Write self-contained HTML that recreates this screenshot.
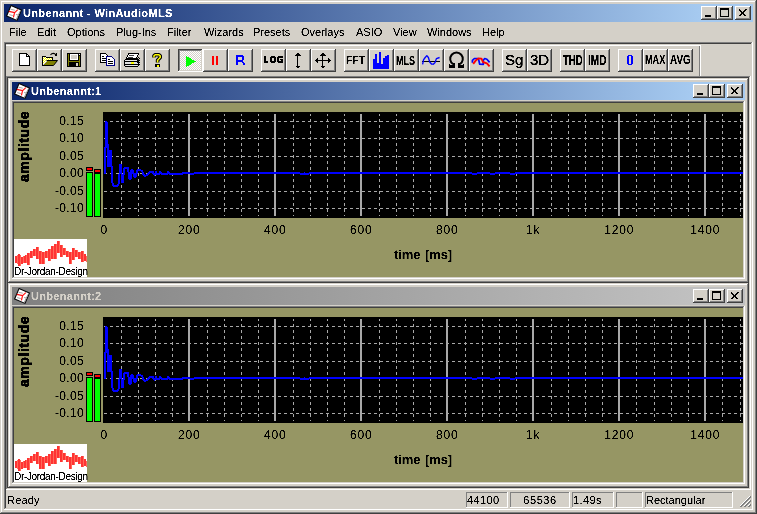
<!DOCTYPE html><html><head><meta charset="utf-8"><style>
html,body{margin:0;padding:0;}
body{width:757px;height:514px;overflow:hidden;position:relative;background:#d4d0c8;font-family:"Liberation Sans",sans-serif;font-size:11px;line-height:12px;color:#000;}
div{box-sizing:border-box;}
svg{position:absolute;overflow:visible;}
.t{filter:url(#crisp);}
</style></head><body><svg width="0" height="0" style="position:absolute"><filter id="crisp" x="-10%" y="-10%" width="120%" height="120%"><feComponentTransfer><feFuncA type="linear" slope="3" intercept="-0.8"/></feComponentTransfer></filter></svg>
<div style="position:absolute;left:0px;top:0px;width:757px;height:514px;background:#404040"></div>
<div style="position:absolute;left:0px;top:0px;width:756px;height:513px;background:#d4d0c8"></div>
<div style="position:absolute;left:1px;top:1px;width:755px;height:512px;background:#808080"></div>
<div style="position:absolute;left:1px;top:1px;width:754px;height:511px;background:#ffffff"></div>
<div style="position:absolute;left:2px;top:2px;width:753px;height:510px;background:#d4d0c8"></div>
<div style="position:absolute;left:4px;top:4px;width:749px;height:18px;background:linear-gradient(to right,#0a246a 0px,#a6caf0 697px)"></div>
<svg style="left:6px;top:5px" width="16" height="16" viewBox="0 0 16 16">
<polygon points="5,0.6 15.4,5 11,15.4 0.6,11" fill="#fff" stroke="#000" stroke-width="1.1"/>
<path d="M14.2 6.2 L10.4 14.2" stroke="#909090" stroke-width="1" fill="none"/>
<path d="M4.5 4.2 L8.8 5.2 M3.2 9.6 L6.8 10.6 M10 9.5 L12.5 10" stroke="#a0a0a0" stroke-width="0.9" fill="none"/>
<path d="M2.8 6.3 L8.6 7.6 L11.8 4.6 M8.6 7.6 L7.4 12.3" stroke="#ff1010" stroke-width="1.2" fill="none"/>
</svg>
<div class="t" style="position:absolute;left:23px;top:7px;white-space:pre;color:#fff;font-weight:bold;letter-spacing:0.35px">Unbenannt - WinAudioMLS</div>
<div style="position:absolute;left:701px;top:6px;width:16px;height:14px;background:#404040"></div>
<div style="position:absolute;left:701px;top:6px;width:15px;height:13px;background:#ffffff"></div>
<div style="position:absolute;left:702px;top:7px;width:14px;height:12px;background:#808080"></div>
<div style="position:absolute;left:702px;top:7px;width:13px;height:11px;background:#d4d0c8"></div>
<div style="position:absolute;left:703px;top:8px;width:12px;height:10px;background:#d4d0c8"></div>
<div style="position:absolute;left:705px;top:15px;width:6px;height:2px;background:#000"></div>
<div style="position:absolute;left:717px;top:6px;width:16px;height:14px;background:#404040"></div>
<div style="position:absolute;left:717px;top:6px;width:15px;height:13px;background:#ffffff"></div>
<div style="position:absolute;left:718px;top:7px;width:14px;height:12px;background:#808080"></div>
<div style="position:absolute;left:718px;top:7px;width:13px;height:11px;background:#d4d0c8"></div>
<div style="position:absolute;left:719px;top:8px;width:12px;height:10px;background:#d4d0c8"></div>
<div style="position:absolute;left:720px;top:8px;width:9px;height:9px;background:#000"></div>
<div style="position:absolute;left:721px;top:10px;width:7px;height:6px;background:#d4d0c8"></div>
<div style="position:absolute;left:735px;top:6px;width:16px;height:14px;background:#404040"></div>
<div style="position:absolute;left:735px;top:6px;width:15px;height:13px;background:#ffffff"></div>
<div style="position:absolute;left:736px;top:7px;width:14px;height:12px;background:#808080"></div>
<div style="position:absolute;left:736px;top:7px;width:13px;height:11px;background:#d4d0c8"></div>
<div style="position:absolute;left:737px;top:8px;width:12px;height:10px;background:#d4d0c8"></div>
<svg style="left:735px;top:6px" width="16" height="14"><path d="M4.5 3.5 L11 10 M4 3.5 L10.5 10 M11 3.5 L4.5 10 M11.5 3.5 L5 10" stroke="#000" stroke-width="1" fill="none" shape-rendering="crispEdges"/></svg>
<div class="t" style="position:absolute;left:9px;top:26px;white-space:pre;">File</div>
<div class="t" style="position:absolute;left:37px;top:26px;white-space:pre;">Edit</div>
<div class="t" style="position:absolute;left:67px;top:26px;white-space:pre;">Options</div>
<div class="t" style="position:absolute;left:116px;top:26px;white-space:pre;">Plug-Ins</div>
<div class="t" style="position:absolute;left:167px;top:26px;white-space:pre;">Filter</div>
<div class="t" style="position:absolute;left:204px;top:26px;white-space:pre;">Wizards</div>
<div class="t" style="position:absolute;left:253px;top:26px;white-space:pre;">Presets</div>
<div class="t" style="position:absolute;left:301px;top:26px;white-space:pre;">Overlays</div>
<div class="t" style="position:absolute;left:356px;top:26px;white-space:pre;">ASIO</div>
<div class="t" style="position:absolute;left:393px;top:26px;white-space:pre;">View</div>
<div class="t" style="position:absolute;left:427px;top:26px;white-space:pre;">Windows</div>
<div class="t" style="position:absolute;left:482px;top:26px;white-space:pre;">Help</div>
<div style="position:absolute;left:4px;top:42px;width:749px;height:468px;background:#ffffff"></div>
<div style="position:absolute;left:4px;top:42px;width:748px;height:467px;background:#808080"></div>
<div style="position:absolute;left:5px;top:43px;width:747px;height:466px;background:#d4d0c8"></div>
<div style="position:absolute;left:5px;top:43px;width:746px;height:465px;background:#404040"></div>
<div style="position:absolute;left:6px;top:44px;width:745px;height:464px;background:#d4d0c8"></div>
<div style="position:absolute;left:6px;top:45px;width:695px;height:1px;background:#ffffff"></div>
<div style="position:absolute;left:699px;top:46px;width:1px;height:30px;background:#808080"></div>
<div style="position:absolute;left:700px;top:46px;width:1px;height:30px;background:#ffffff"></div>
<div style="position:absolute;left:12px;top:49px;width:25px;height:23px;background:#404040"></div>
<div style="position:absolute;left:12px;top:49px;width:24px;height:22px;background:#ffffff"></div>
<div style="position:absolute;left:13px;top:50px;width:23px;height:21px;background:#808080"></div>
<div style="position:absolute;left:13px;top:50px;width:22px;height:20px;background:#d4d0c8"></div>
<div style="position:absolute;left:37px;top:49px;width:25px;height:23px;background:#404040"></div>
<div style="position:absolute;left:37px;top:49px;width:24px;height:22px;background:#ffffff"></div>
<div style="position:absolute;left:38px;top:50px;width:23px;height:21px;background:#808080"></div>
<div style="position:absolute;left:38px;top:50px;width:22px;height:20px;background:#d4d0c8"></div>
<div style="position:absolute;left:62px;top:49px;width:25px;height:23px;background:#404040"></div>
<div style="position:absolute;left:62px;top:49px;width:24px;height:22px;background:#ffffff"></div>
<div style="position:absolute;left:63px;top:50px;width:23px;height:21px;background:#808080"></div>
<div style="position:absolute;left:63px;top:50px;width:22px;height:20px;background:#d4d0c8"></div>
<div style="position:absolute;left:95px;top:49px;width:25px;height:23px;background:#404040"></div>
<div style="position:absolute;left:95px;top:49px;width:24px;height:22px;background:#ffffff"></div>
<div style="position:absolute;left:96px;top:50px;width:23px;height:21px;background:#808080"></div>
<div style="position:absolute;left:96px;top:50px;width:22px;height:20px;background:#d4d0c8"></div>
<div style="position:absolute;left:120px;top:49px;width:25px;height:23px;background:#404040"></div>
<div style="position:absolute;left:120px;top:49px;width:24px;height:22px;background:#ffffff"></div>
<div style="position:absolute;left:121px;top:50px;width:23px;height:21px;background:#808080"></div>
<div style="position:absolute;left:121px;top:50px;width:22px;height:20px;background:#d4d0c8"></div>
<div style="position:absolute;left:145px;top:49px;width:25px;height:23px;background:#404040"></div>
<div style="position:absolute;left:145px;top:49px;width:24px;height:22px;background:#ffffff"></div>
<div style="position:absolute;left:146px;top:50px;width:23px;height:21px;background:#808080"></div>
<div style="position:absolute;left:146px;top:50px;width:22px;height:20px;background:#d4d0c8"></div>
<div style="position:absolute;left:203px;top:49px;width:25px;height:23px;background:#404040"></div>
<div style="position:absolute;left:203px;top:49px;width:24px;height:22px;background:#ffffff"></div>
<div style="position:absolute;left:204px;top:50px;width:23px;height:21px;background:#808080"></div>
<div style="position:absolute;left:204px;top:50px;width:22px;height:20px;background:#d4d0c8"></div>
<div style="position:absolute;left:228px;top:49px;width:25px;height:23px;background:#404040"></div>
<div style="position:absolute;left:228px;top:49px;width:24px;height:22px;background:#ffffff"></div>
<div style="position:absolute;left:229px;top:50px;width:23px;height:21px;background:#808080"></div>
<div style="position:absolute;left:229px;top:50px;width:22px;height:20px;background:#d4d0c8"></div>
<div style="position:absolute;left:261px;top:49px;width:25px;height:23px;background:#404040"></div>
<div style="position:absolute;left:261px;top:49px;width:24px;height:22px;background:#ffffff"></div>
<div style="position:absolute;left:262px;top:50px;width:23px;height:21px;background:#808080"></div>
<div style="position:absolute;left:262px;top:50px;width:22px;height:20px;background:#d4d0c8"></div>
<div style="position:absolute;left:286px;top:49px;width:25px;height:23px;background:#404040"></div>
<div style="position:absolute;left:286px;top:49px;width:24px;height:22px;background:#ffffff"></div>
<div style="position:absolute;left:287px;top:50px;width:23px;height:21px;background:#808080"></div>
<div style="position:absolute;left:287px;top:50px;width:22px;height:20px;background:#d4d0c8"></div>
<div style="position:absolute;left:311px;top:49px;width:25px;height:23px;background:#404040"></div>
<div style="position:absolute;left:311px;top:49px;width:24px;height:22px;background:#ffffff"></div>
<div style="position:absolute;left:312px;top:50px;width:23px;height:21px;background:#808080"></div>
<div style="position:absolute;left:312px;top:50px;width:22px;height:20px;background:#d4d0c8"></div>
<div style="position:absolute;left:344px;top:49px;width:25px;height:23px;background:#404040"></div>
<div style="position:absolute;left:344px;top:49px;width:24px;height:22px;background:#ffffff"></div>
<div style="position:absolute;left:345px;top:50px;width:23px;height:21px;background:#808080"></div>
<div style="position:absolute;left:345px;top:50px;width:22px;height:20px;background:#d4d0c8"></div>
<div style="position:absolute;left:369px;top:49px;width:25px;height:23px;background:#404040"></div>
<div style="position:absolute;left:369px;top:49px;width:24px;height:22px;background:#ffffff"></div>
<div style="position:absolute;left:370px;top:50px;width:23px;height:21px;background:#808080"></div>
<div style="position:absolute;left:370px;top:50px;width:22px;height:20px;background:#d4d0c8"></div>
<div style="position:absolute;left:394px;top:49px;width:25px;height:23px;background:#404040"></div>
<div style="position:absolute;left:394px;top:49px;width:24px;height:22px;background:#ffffff"></div>
<div style="position:absolute;left:395px;top:50px;width:23px;height:21px;background:#808080"></div>
<div style="position:absolute;left:395px;top:50px;width:22px;height:20px;background:#d4d0c8"></div>
<div style="position:absolute;left:419px;top:49px;width:25px;height:23px;background:#404040"></div>
<div style="position:absolute;left:419px;top:49px;width:24px;height:22px;background:#ffffff"></div>
<div style="position:absolute;left:420px;top:50px;width:23px;height:21px;background:#808080"></div>
<div style="position:absolute;left:420px;top:50px;width:22px;height:20px;background:#d4d0c8"></div>
<div style="position:absolute;left:444px;top:49px;width:25px;height:23px;background:#404040"></div>
<div style="position:absolute;left:444px;top:49px;width:24px;height:22px;background:#ffffff"></div>
<div style="position:absolute;left:445px;top:50px;width:23px;height:21px;background:#808080"></div>
<div style="position:absolute;left:445px;top:50px;width:22px;height:20px;background:#d4d0c8"></div>
<div style="position:absolute;left:469px;top:49px;width:25px;height:23px;background:#404040"></div>
<div style="position:absolute;left:469px;top:49px;width:24px;height:22px;background:#ffffff"></div>
<div style="position:absolute;left:470px;top:50px;width:23px;height:21px;background:#808080"></div>
<div style="position:absolute;left:470px;top:50px;width:22px;height:20px;background:#d4d0c8"></div>
<div style="position:absolute;left:502px;top:49px;width:25px;height:23px;background:#404040"></div>
<div style="position:absolute;left:502px;top:49px;width:24px;height:22px;background:#ffffff"></div>
<div style="position:absolute;left:503px;top:50px;width:23px;height:21px;background:#808080"></div>
<div style="position:absolute;left:503px;top:50px;width:22px;height:20px;background:#d4d0c8"></div>
<div style="position:absolute;left:527px;top:49px;width:25px;height:23px;background:#404040"></div>
<div style="position:absolute;left:527px;top:49px;width:24px;height:22px;background:#ffffff"></div>
<div style="position:absolute;left:528px;top:50px;width:23px;height:21px;background:#808080"></div>
<div style="position:absolute;left:528px;top:50px;width:22px;height:20px;background:#d4d0c8"></div>
<div style="position:absolute;left:560px;top:49px;width:25px;height:23px;background:#404040"></div>
<div style="position:absolute;left:560px;top:49px;width:24px;height:22px;background:#ffffff"></div>
<div style="position:absolute;left:561px;top:50px;width:23px;height:21px;background:#808080"></div>
<div style="position:absolute;left:561px;top:50px;width:22px;height:20px;background:#d4d0c8"></div>
<div style="position:absolute;left:585px;top:49px;width:25px;height:23px;background:#404040"></div>
<div style="position:absolute;left:585px;top:49px;width:24px;height:22px;background:#ffffff"></div>
<div style="position:absolute;left:586px;top:50px;width:23px;height:21px;background:#808080"></div>
<div style="position:absolute;left:586px;top:50px;width:22px;height:20px;background:#d4d0c8"></div>
<div style="position:absolute;left:618px;top:49px;width:25px;height:23px;background:#404040"></div>
<div style="position:absolute;left:618px;top:49px;width:24px;height:22px;background:#ffffff"></div>
<div style="position:absolute;left:619px;top:50px;width:23px;height:21px;background:#808080"></div>
<div style="position:absolute;left:619px;top:50px;width:22px;height:20px;background:#d4d0c8"></div>
<div style="position:absolute;left:643px;top:49px;width:25px;height:23px;background:#404040"></div>
<div style="position:absolute;left:643px;top:49px;width:24px;height:22px;background:#ffffff"></div>
<div style="position:absolute;left:644px;top:50px;width:23px;height:21px;background:#808080"></div>
<div style="position:absolute;left:644px;top:50px;width:22px;height:20px;background:#d4d0c8"></div>
<div style="position:absolute;left:668px;top:49px;width:25px;height:23px;background:#404040"></div>
<div style="position:absolute;left:668px;top:49px;width:24px;height:22px;background:#ffffff"></div>
<div style="position:absolute;left:669px;top:50px;width:23px;height:21px;background:#808080"></div>
<div style="position:absolute;left:669px;top:50px;width:22px;height:20px;background:#d4d0c8"></div>
<div style="position:absolute;left:178px;top:49px;width:25px;height:23px;background:#ffffff"></div>
<div style="position:absolute;left:178px;top:49px;width:24px;height:22px;background:#404040"></div>
<div style="position:absolute;left:179px;top:50px;width:23px;height:21px;background:#d4d0c8"></div>
<div style="position:absolute;left:179px;top:50px;width:22px;height:20px;background:#808080"></div>
<div style="position:absolute;left:180px;top:51px;width:21px;height:19px;background-color:#fff;background-image:linear-gradient(45deg,#d4d0c8 25%,transparent 25%,transparent 75%,#d4d0c8 75%),linear-gradient(45deg,#d4d0c8 25%,transparent 25%,transparent 75%,#d4d0c8 75%);background-size:2px 2px;background-position:0 0,1px 1px"></div>
<svg style="left:19px;top:53px" width="12" height="14" viewBox="0 0 12 14" shape-rendering="crispEdges"><path d="M0.5 0.5 H7.5 L10.5 3.5 V12.5 H0.5 Z" fill="#fff" stroke="#000"/><path d="M7.5 0.5 V3.5 H10.5" fill="none" stroke="#000"/></svg>
<svg style="left:42px;top:52px" width="17" height="15" viewBox="0 0 17 15" shape-rendering="crispEdges"><defs><pattern id="dy" width="2" height="2" patternUnits="userSpaceOnUse"><rect width="2" height="2" fill="#ffff00"/><rect width="1" height="1" fill="#fff"/><rect x="1" y="1" width="1" height="1" fill="#fff"/></pattern></defs><rect x="0" y="4" width="1" height="10" fill="#000"/><rect x="1" y="4" width="3" height="1" fill="#000"/><rect x="4" y="5" width="7" height="1" fill="#000"/><rect x="10" y="5" width="1" height="4" fill="#000"/><polygon points="1,5 4,5 4,6 10,6 10,8.5 4.5,8.5 1,12.5" fill="url(#dy)"/><polygon points="1.5,13 5,9 15,9 11.5,13" fill="#808000"/><path d="M4.5 8.5 H15.5 L11.5 13.5 H0.5" fill="none" stroke="#000" stroke-width="1" shape-rendering="auto"/><path d="M8.5 2.8 Q10.5 0.3 13.3 2" fill="none" stroke="#000" stroke-width="1.1" shape-rendering="auto"/><polygon points="11.8,3.2 15,1.2 15,4.6" fill="#000"/></svg>
<svg style="left:67px;top:53px" width="14" height="14" viewBox="0 0 14 14" shape-rendering="crispEdges"><rect x="0" y="0" width="14" height="14" fill="#000"/><rect x="1" y="1" width="1" height="12" fill="#808000"/><rect x="12" y="3" width="1" height="10" fill="#808000"/><rect x="1" y="8" width="12" height="1" fill="#808000"/><rect x="3" y="1" width="8" height="6" fill="#fff"/><rect x="4" y="2" width="6" height="4" fill="#d4d0c8"/><rect x="9" y="10" width="2" height="3" fill="#d4d0c8"/><rect x="12" y="1" width="1" height="1" fill="#fff"/></svg>
<svg style="left:100px;top:53px" width="16" height="14" viewBox="0 0 16 14" shape-rendering="crispEdges"><path d="M0.5 0.5 H5.5 L7.5 2.5 V9.5 H0.5 Z" fill="#fff" stroke="#000"/><rect x="2" y="3" width="2" height="1" fill="#000"/><rect x="2" y="5" width="4" height="1" fill="#000"/><rect x="2" y="7" width="4" height="1" fill="#000"/><path d="M6.5 3.5 H11.5 L14.5 6.5 V12.5 H6.5 Z" fill="#fff" stroke="#000080"/><rect x="8" y="6" width="2" height="1" fill="#000"/><rect x="8" y="8" width="5" height="1" fill="#000"/><rect x="8" y="10" width="5" height="1" fill="#000"/></svg>
<svg style="left:124px;top:53px" width="17" height="14" viewBox="0 0 17 14" shape-rendering="crispEdges"><polygon points="4.5,0.5 14.5,0.5 12.5,5.5 2.5,5.5" fill="#fff" stroke="#000"/><rect x="5" y="2" width="5" height="1" fill="#404040"/><rect x="4" y="4" width="5" height="1" fill="#404040"/><rect x="1" y="6" width="13" height="1" fill="#000"/><rect x="0" y="7" width="1" height="6" fill="#000"/><rect x="14" y="7" width="1" height="6" fill="#000"/><rect x="1" y="7" width="13" height="1" fill="#e8e8e8"/><rect x="1" y="8" width="13" height="1" fill="#000"/><rect x="1" y="9" width="13" height="2" fill="#e0e0e0"/><rect x="7" y="9" width="3" height="2" fill="#ffff00"/><rect x="1" y="11" width="13" height="1" fill="#000"/><rect x="2" y="12" width="11" height="1" fill="#e8e8e8"/><rect x="1" y="13" width="13" height="1" fill="#000"/><rect x="14" y="4" width="1" height="1" fill="#000"/><rect x="13" y="5" width="1" height="1" fill="#000"/><rect x="15" y="5" width="1" height="1" fill="#000"/><rect x="14" y="6" width="1" height="1" fill="#000"/><rect x="13" y="7" width="1" height="1" fill="#000"/><rect x="15" y="7" width="1" height="1" fill="#000"/><rect x="14" y="8" width="1" height="1" fill="#000"/><rect x="13" y="9" width="1" height="1" fill="#000"/><rect x="15" y="9" width="1" height="1" fill="#000"/><rect x="14" y="10" width="1" height="1" fill="#000"/><rect x="13" y="11" width="1" height="1" fill="#000"/><rect x="15" y="11" width="1" height="1" fill="#000"/><rect x="14" y="12" width="1" height="1" fill="#000"/></svg>
<svg style="left:152px;top:53px" width="11" height="14" viewBox="0 0 11 14" shape-rendering="crispEdges"><path d="M2 4.5 V2.8 L3.3 1.7 H6.8 L8.2 2.8 V4.5 L5.6 7.2 V9.6" fill="none" stroke="#000" stroke-width="3.6" stroke-linejoin="round" shape-rendering="auto"/><rect x="3" y="10.5" width="5" height="3.5" rx="0.8" fill="#000"/><path d="M2 4.5 V2.8 L3.3 1.7 H6.8 L8.2 2.8 V4.5 L5.6 7.2 V9.6" fill="none" stroke="#ffff00" stroke-width="1.5" stroke-linejoin="miter" shape-rendering="auto"/><rect x="4.5" y="11.5" width="2" height="2" fill="#ffff00"/></svg>
<svg style="left:186px;top:56px" width="10" height="11" viewBox="0 0 10 11" shape-rendering="crispEdges"><polygon points="0,0 0,11 10,5.5" fill="#00ff00"/></svg>
<div style="position:absolute;left:212px;top:56px;width:2px;height:9px;background:#ff0000"></div>
<div style="position:absolute;left:216px;top:56px;width:2px;height:9px;background:#ff0000"></div>
<div style="position:absolute;left:236px;top:55px;width:2px;height:10px;background:#0000ff"></div>
<div style="position:absolute;left:238px;top:55px;width:5px;height:2px;background:#0000ff"></div>
<div style="position:absolute;left:242px;top:57px;width:2px;height:3px;background:#0000ff"></div>
<div style="position:absolute;left:238px;top:60px;width:5px;height:2px;background:#0000ff"></div>
<div style="position:absolute;left:242px;top:62px;width:2px;height:1px;background:#0000ff"></div>
<div style="position:absolute;left:243px;top:63px;width:2px;height:2px;background:#0000ff"></div>
<div style="position:absolute;left:243px;top:56px;width:1px;height:1px;background:#0000ff"></div>
<div style="position:absolute;left:628px;top:55px;width:4px;height:1px;background:#0000ff"></div>
<div style="position:absolute;left:627px;top:56px;width:2px;height:8px;background:#0000ff"></div>
<div style="position:absolute;left:631px;top:56px;width:2px;height:8px;background:#0000ff"></div>
<div style="position:absolute;left:628px;top:64px;width:4px;height:1px;background:#0000ff"></div>
<div style="position:absolute;left:264px;top:56px;width:2px;height:7px;background:#000"></div>
<div style="position:absolute;left:266px;top:61px;width:2px;height:2px;background:#000"></div>
<div style="position:absolute;left:271px;top:56px;width:4px;height:2px;background:#000"></div>
<div style="position:absolute;left:270px;top:57px;width:2px;height:5px;background:#000"></div>
<div style="position:absolute;left:274px;top:57px;width:2px;height:5px;background:#000"></div>
<div style="position:absolute;left:271px;top:61px;width:4px;height:2px;background:#000"></div>
<div style="position:absolute;left:278px;top:56px;width:5px;height:2px;background:#000"></div>
<div style="position:absolute;left:277px;top:57px;width:2px;height:5px;background:#000"></div>
<div style="position:absolute;left:278px;top:61px;width:5px;height:2px;background:#000"></div>
<div style="position:absolute;left:281px;top:59px;width:2px;height:3px;background:#000"></div>
<div style="position:absolute;left:280px;top:59px;width:1px;height:1px;background:#000"></div>
<svg style="left:294px;top:52px" width="7" height="17" viewBox="0 0 7 17" shape-rendering="crispEdges"><rect x="3" y="2" width="1" height="13" fill="#000"/><polygon points="3.5,0.5 0.5,3.5 6.5,3.5" fill="#000"/><polygon points="3.5,16.5 0.5,13.5 6.5,13.5" fill="#000"/></svg>
<svg style="left:314px;top:52px" width="17" height="17" viewBox="0 0 17 17" shape-rendering="crispEdges"><rect x="8" y="2" width="1" height="13" fill="#000"/><rect x="2" y="8" width="13" height="1" fill="#000"/><polygon points="8.5,0.5 5.5,3.5 11.5,3.5" fill="#000"/><polygon points="8.5,16.5 5.5,13.5 11.5,13.5" fill="#000"/><polygon points="0.5,8.5 3.5,5.5 3.5,11.5" fill="#000"/><polygon points="16.5,8.5 13.5,5.5 13.5,11.5" fill="#000"/></svg>
<div style="position:absolute;left:373px;top:59px;width:2px;height:10px;background:#0000ff"></div>
<div style="position:absolute;left:375px;top:54px;width:2px;height:15px;background:#0000ff"></div>
<div style="position:absolute;left:377px;top:63px;width:2px;height:6px;background:#0000ff"></div>
<div style="position:absolute;left:379px;top:52px;width:2px;height:17px;background:#0000ff"></div>
<div style="position:absolute;left:381px;top:64px;width:2px;height:5px;background:#0000ff"></div>
<div style="position:absolute;left:383px;top:58px;width:2px;height:11px;background:#0000ff"></div>
<div style="position:absolute;left:385px;top:56px;width:2px;height:13px;background:#0000ff"></div>
<div style="position:absolute;left:387px;top:55px;width:2px;height:14px;background:#0000ff"></div>
<svg style="left:448px;top:51px" width="17" height="18" viewBox="0 0 17 18" shape-rendering="crispEdges"><path d="M5.2 13.2 A6.3 6.3 0 1 1 11.8 13.2" fill="none" stroke="#000" stroke-width="2" shape-rendering="auto"/><rect x="1" y="14" width="6" height="3" fill="#000"/><rect x="10" y="14" width="6" height="3" fill="#000"/><rect x="5" y="12" width="2" height="3" fill="#000"/><rect x="10" y="12" width="2" height="3" fill="#000"/><rect x="1" y="13" width="1" height="1" fill="#000"/><rect x="15" y="13" width="1" height="1" fill="#000"/></svg>
<svg style="left:422px;top:54px" width="19" height="12" viewBox="0 0 19 12" shape-rendering="crispEdges"><rect x="0" y="7" width="18" height="1" fill="#000"/><polyline points="0.6,10.4 1.5,5.8 2.8,4 4.8,1.6 6.4,3.5 7.7,8 9.5,10 11.3,10.2 13.1,8.4 14.4,4.6 17.6,3.5" fill="none" stroke="#0000ff" stroke-width="1.35" stroke-linejoin="round" shape-rendering="auto"/></svg>
<svg style="left:471px;top:57px" width="20" height="11" viewBox="0 0 20 11" shape-rendering="crispEdges"><polyline points="1.4,5.8 1.4,3.4 3.4,1.5 7,1.5 7.8,3.2 8.7,7.2 12.3,7.4 12.3,3.2 13.7,1.5 15.9,2.3 18.6,5.4" fill="none" stroke="#0000ff" stroke-width="1.7" stroke-linejoin="round" shape-rendering="auto"/><polyline points="2.2,6.8 4.7,3.6 7.4,1.5 10.5,1.6 11.9,5 15.9,6.3 18.6,9.4" fill="none" stroke="#ff0000" stroke-width="1.9" stroke-linejoin="round" shape-rendering="auto"/></svg>
<div class="t" style="position:absolute;left:346.05px;top:55.0px;font-size:11px;line-height:11px;font-weight:bold;white-space:pre;color:#000;transform:scale(0.947,1.0);transform-origin:0 0;">FFT</div>
<div class="t" style="position:absolute;left:396.25px;top:55.0px;font-size:12px;line-height:12px;font-weight:bold;white-space:pre;color:#000;transform:scale(0.75,1.0);transform-origin:0 0;">MLS</div>
<div class="t" style="position:absolute;left:505.0px;top:52.0px;font-size:15px;line-height:15px;font-weight:normal;white-space:pre;color:#000;transform:scale(1.0,1.0);transform-origin:0 0;-webkit-text-stroke:0.25px #000;">Sg</div>
<div class="t" style="position:absolute;left:530.0px;top:52.0px;font-size:15px;line-height:15px;font-weight:normal;white-space:pre;color:#000;transform:scale(1.0,1.0);transform-origin:0 0;-webkit-text-stroke:0.25px #000;">3D</div>
<div class="t" style="position:absolute;left:563.0px;top:52.78px;font-size:13px;line-height:13px;font-weight:bold;white-space:pre;color:#000;transform:scale(0.731,1.111);transform-origin:0 0;">THD</div>
<div class="t" style="position:absolute;left:588.23px;top:52.78px;font-size:13px;line-height:13px;font-weight:bold;white-space:pre;color:#000;transform:scale(0.773,1.111);transform-origin:0 0;">IMD</div>
<div class="t" style="position:absolute;left:645.24px;top:54.0px;font-size:12px;line-height:12px;font-weight:bold;white-space:pre;color:#000;transform:scale(0.76,1.0);transform-origin:0 0;">MAX</div>
<div class="t" style="position:absolute;left:670.17px;top:54.0px;font-size:12px;line-height:12px;font-weight:bold;white-space:pre;color:#000;transform:scale(0.826,1.0);transform-origin:0 0;">AVG</div>
<div style="position:absolute;left:6px;top:76px;width:745px;height:414px;background:#ffffff"></div>
<div style="position:absolute;left:6px;top:76px;width:744px;height:413px;background:#808080"></div>
<div style="position:absolute;left:7px;top:77px;width:743px;height:412px;background:#d4d0c8"></div>
<div style="position:absolute;left:7px;top:77px;width:742px;height:411px;background:#404040"></div>
<div style="position:absolute;left:8px;top:78px;width:741px;height:410px;background:#808080"></div>
<div style="position:absolute;left:8px;top:78px;width:741px;height:205px;background:#404040"></div>
<div style="position:absolute;left:8px;top:78px;width:740px;height:204px;background:#d4d0c8"></div>
<div style="position:absolute;left:9px;top:79px;width:739px;height:203px;background:#808080"></div>
<div style="position:absolute;left:9px;top:79px;width:738px;height:202px;background:#ffffff"></div>
<div style="position:absolute;left:10px;top:80px;width:737px;height:201px;background:#d4d0c8"></div>
<div style="position:absolute;left:12px;top:82px;width:733px;height:18px;background:linear-gradient(to right,#0a246a 0px,#a6caf0 681px)"></div>
<svg style="left:14px;top:83px" width="16" height="16" viewBox="0 0 16 16">
<polygon points="5,0.6 15.4,5 11,15.4 0.6,11" fill="#fff" stroke="#000" stroke-width="1.1"/>
<path d="M14.2 6.2 L10.4 14.2" stroke="#909090" stroke-width="1" fill="none"/>
<path d="M4.5 4.2 L8.8 5.2 M3.2 9.6 L6.8 10.6 M10 9.5 L12.5 10" stroke="#a0a0a0" stroke-width="0.9" fill="none"/>
<path d="M2.8 6.3 L8.6 7.6 L11.8 4.6 M8.6 7.6 L7.4 12.3" stroke="#ff1010" stroke-width="1.2" fill="none"/>
</svg>
<div class="t" style="position:absolute;left:31px;top:85px;white-space:pre;color:#fff;font-weight:bold;letter-spacing:0.3px">Unbenannt:1</div>
<div style="position:absolute;left:693px;top:84px;width:16px;height:14px;background:#404040"></div>
<div style="position:absolute;left:693px;top:84px;width:15px;height:13px;background:#ffffff"></div>
<div style="position:absolute;left:694px;top:85px;width:14px;height:12px;background:#808080"></div>
<div style="position:absolute;left:694px;top:85px;width:13px;height:11px;background:#d4d0c8"></div>
<div style="position:absolute;left:695px;top:86px;width:12px;height:10px;background:#d4d0c8"></div>
<div style="position:absolute;left:697px;top:93px;width:6px;height:2px;background:#000"></div>
<div style="position:absolute;left:709px;top:84px;width:16px;height:14px;background:#404040"></div>
<div style="position:absolute;left:709px;top:84px;width:15px;height:13px;background:#ffffff"></div>
<div style="position:absolute;left:710px;top:85px;width:14px;height:12px;background:#808080"></div>
<div style="position:absolute;left:710px;top:85px;width:13px;height:11px;background:#d4d0c8"></div>
<div style="position:absolute;left:711px;top:86px;width:12px;height:10px;background:#d4d0c8"></div>
<div style="position:absolute;left:712px;top:86px;width:9px;height:9px;background:#000"></div>
<div style="position:absolute;left:713px;top:88px;width:7px;height:6px;background:#d4d0c8"></div>
<div style="position:absolute;left:727px;top:84px;width:16px;height:14px;background:#404040"></div>
<div style="position:absolute;left:727px;top:84px;width:15px;height:13px;background:#ffffff"></div>
<div style="position:absolute;left:728px;top:85px;width:14px;height:12px;background:#808080"></div>
<div style="position:absolute;left:728px;top:85px;width:13px;height:11px;background:#d4d0c8"></div>
<div style="position:absolute;left:729px;top:86px;width:12px;height:10px;background:#d4d0c8"></div>
<svg style="left:727px;top:84px" width="16" height="14"><path d="M4.5 3.5 L11 10 M4 3.5 L10.5 10 M11 3.5 L4.5 10 M11.5 3.5 L5 10" stroke="#000" stroke-width="1" fill="none" shape-rendering="crispEdges"/></svg>
<div style="position:absolute;left:12px;top:101px;width:733px;height:178px;background:#ffffff"></div>
<div style="position:absolute;left:12px;top:101px;width:732px;height:177px;background:#808080"></div>
<div style="position:absolute;left:13px;top:102px;width:731px;height:176px;background:#d4d0c8"></div>
<div style="position:absolute;left:13px;top:102px;width:730px;height:175px;background:#404040"></div>
<div style="position:absolute;left:14px;top:103px;width:729px;height:174px;background:#969664"></div>
<div style="position:absolute;left:103px;top:112px;width:640px;height:106px;background:#000"></div>
<div style="position:absolute;left:103px;top:121px;width:640px;height:1px;background:repeating-linear-gradient(90deg,#a8a8a8 0 3px,transparent 3px 6px);background-position:1px 0"></div>
<div style="position:absolute;left:103px;top:138px;width:640px;height:1px;background:repeating-linear-gradient(90deg,#a8a8a8 0 3px,transparent 3px 6px);background-position:1px 0"></div>
<div style="position:absolute;left:103px;top:156px;width:640px;height:1px;background:repeating-linear-gradient(90deg,#a8a8a8 0 3px,transparent 3px 6px);background-position:1px 0"></div>
<div style="position:absolute;left:103px;top:173px;width:640px;height:1px;background:repeating-linear-gradient(90deg,#a8a8a8 0 3px,transparent 3px 6px);background-position:1px 0"></div>
<div style="position:absolute;left:103px;top:191px;width:640px;height:1px;background:repeating-linear-gradient(90deg,#a8a8a8 0 3px,transparent 3px 6px);background-position:1px 0"></div>
<div style="position:absolute;left:103px;top:208px;width:640px;height:1px;background:repeating-linear-gradient(90deg,#a8a8a8 0 3px,transparent 3px 6px);background-position:1px 0"></div>
<div style="position:absolute;left:121px;top:114px;width:1px;height:102px;background:repeating-linear-gradient(180deg,#a8a8a8 0 3px,transparent 3px 6px);background-position:0 -1px"></div>
<div style="position:absolute;left:138px;top:114px;width:1px;height:102px;background:repeating-linear-gradient(180deg,#a8a8a8 0 3px,transparent 3px 6px);background-position:0 -1px"></div>
<div style="position:absolute;left:155px;top:114px;width:1px;height:102px;background:repeating-linear-gradient(180deg,#a8a8a8 0 3px,transparent 3px 6px);background-position:0 -1px"></div>
<div style="position:absolute;left:172px;top:114px;width:1px;height:102px;background:repeating-linear-gradient(180deg,#a8a8a8 0 3px,transparent 3px 6px);background-position:0 -1px"></div>
<div style="position:absolute;left:188px;top:114px;width:2px;height:102px;background:#a8a8a8"></div>
<div style="position:absolute;left:207px;top:114px;width:1px;height:102px;background:repeating-linear-gradient(180deg,#a8a8a8 0 3px,transparent 3px 6px);background-position:0 -1px"></div>
<div style="position:absolute;left:224px;top:114px;width:1px;height:102px;background:repeating-linear-gradient(180deg,#a8a8a8 0 3px,transparent 3px 6px);background-position:0 -1px"></div>
<div style="position:absolute;left:241px;top:114px;width:1px;height:102px;background:repeating-linear-gradient(180deg,#a8a8a8 0 3px,transparent 3px 6px);background-position:0 -1px"></div>
<div style="position:absolute;left:258px;top:114px;width:1px;height:102px;background:repeating-linear-gradient(180deg,#a8a8a8 0 3px,transparent 3px 6px);background-position:0 -1px"></div>
<div style="position:absolute;left:274px;top:114px;width:2px;height:102px;background:#a8a8a8"></div>
<div style="position:absolute;left:293px;top:114px;width:1px;height:102px;background:repeating-linear-gradient(180deg,#a8a8a8 0 3px,transparent 3px 6px);background-position:0 -1px"></div>
<div style="position:absolute;left:310px;top:114px;width:1px;height:102px;background:repeating-linear-gradient(180deg,#a8a8a8 0 3px,transparent 3px 6px);background-position:0 -1px"></div>
<div style="position:absolute;left:327px;top:114px;width:1px;height:102px;background:repeating-linear-gradient(180deg,#a8a8a8 0 3px,transparent 3px 6px);background-position:0 -1px"></div>
<div style="position:absolute;left:344px;top:114px;width:1px;height:102px;background:repeating-linear-gradient(180deg,#a8a8a8 0 3px,transparent 3px 6px);background-position:0 -1px"></div>
<div style="position:absolute;left:360px;top:114px;width:2px;height:102px;background:#a8a8a8"></div>
<div style="position:absolute;left:379px;top:114px;width:1px;height:102px;background:repeating-linear-gradient(180deg,#a8a8a8 0 3px,transparent 3px 6px);background-position:0 -1px"></div>
<div style="position:absolute;left:396px;top:114px;width:1px;height:102px;background:repeating-linear-gradient(180deg,#a8a8a8 0 3px,transparent 3px 6px);background-position:0 -1px"></div>
<div style="position:absolute;left:413px;top:114px;width:1px;height:102px;background:repeating-linear-gradient(180deg,#a8a8a8 0 3px,transparent 3px 6px);background-position:0 -1px"></div>
<div style="position:absolute;left:430px;top:114px;width:1px;height:102px;background:repeating-linear-gradient(180deg,#a8a8a8 0 3px,transparent 3px 6px);background-position:0 -1px"></div>
<div style="position:absolute;left:446px;top:114px;width:2px;height:102px;background:#a8a8a8"></div>
<div style="position:absolute;left:465px;top:114px;width:1px;height:102px;background:repeating-linear-gradient(180deg,#a8a8a8 0 3px,transparent 3px 6px);background-position:0 -1px"></div>
<div style="position:absolute;left:482px;top:114px;width:1px;height:102px;background:repeating-linear-gradient(180deg,#a8a8a8 0 3px,transparent 3px 6px);background-position:0 -1px"></div>
<div style="position:absolute;left:499px;top:114px;width:1px;height:102px;background:repeating-linear-gradient(180deg,#a8a8a8 0 3px,transparent 3px 6px);background-position:0 -1px"></div>
<div style="position:absolute;left:516px;top:114px;width:1px;height:102px;background:repeating-linear-gradient(180deg,#a8a8a8 0 3px,transparent 3px 6px);background-position:0 -1px"></div>
<div style="position:absolute;left:532px;top:114px;width:2px;height:102px;background:#a8a8a8"></div>
<div style="position:absolute;left:551px;top:114px;width:1px;height:102px;background:repeating-linear-gradient(180deg,#a8a8a8 0 3px,transparent 3px 6px);background-position:0 -1px"></div>
<div style="position:absolute;left:568px;top:114px;width:1px;height:102px;background:repeating-linear-gradient(180deg,#a8a8a8 0 3px,transparent 3px 6px);background-position:0 -1px"></div>
<div style="position:absolute;left:585px;top:114px;width:1px;height:102px;background:repeating-linear-gradient(180deg,#a8a8a8 0 3px,transparent 3px 6px);background-position:0 -1px"></div>
<div style="position:absolute;left:602px;top:114px;width:1px;height:102px;background:repeating-linear-gradient(180deg,#a8a8a8 0 3px,transparent 3px 6px);background-position:0 -1px"></div>
<div style="position:absolute;left:618px;top:114px;width:2px;height:102px;background:#a8a8a8"></div>
<div style="position:absolute;left:636px;top:114px;width:1px;height:102px;background:repeating-linear-gradient(180deg,#a8a8a8 0 3px,transparent 3px 6px);background-position:0 -1px"></div>
<div style="position:absolute;left:654px;top:114px;width:1px;height:102px;background:repeating-linear-gradient(180deg,#a8a8a8 0 3px,transparent 3px 6px);background-position:0 -1px"></div>
<div style="position:absolute;left:671px;top:114px;width:1px;height:102px;background:repeating-linear-gradient(180deg,#a8a8a8 0 3px,transparent 3px 6px);background-position:0 -1px"></div>
<div style="position:absolute;left:688px;top:114px;width:1px;height:102px;background:repeating-linear-gradient(180deg,#a8a8a8 0 3px,transparent 3px 6px);background-position:0 -1px"></div>
<div style="position:absolute;left:704px;top:114px;width:2px;height:102px;background:#a8a8a8"></div>
<div style="position:absolute;left:722px;top:114px;width:1px;height:102px;background:repeating-linear-gradient(180deg,#a8a8a8 0 3px,transparent 3px 6px);background-position:0 -1px"></div>
<div style="position:absolute;left:740px;top:114px;width:1px;height:102px;background:repeating-linear-gradient(180deg,#a8a8a8 0 3px,transparent 3px 6px);background-position:0 -1px"></div>
<svg style="left:0;top:0" width="757" height="514" shape-rendering="crispEdges" fill="#0000ff"><rect x="104" y="147" width="1" height="27"/><rect x="105" y="121" width="1" height="53"/><rect x="106" y="121" width="1" height="27"/><rect x="107" y="122" width="1" height="45"/><rect x="108" y="144" width="1" height="23"/><rect x="109" y="150" width="1" height="17"/><rect x="110" y="150" width="1" height="17"/><rect x="111" y="150" width="1" height="18"/><rect x="182" y="172" width="1" height="2"/><rect x="183" y="172" width="1" height="2"/><rect x="184" y="172" width="1" height="2"/><rect x="185" y="172" width="1" height="2"/><rect x="186" y="172" width="1" height="2"/><rect x="187" y="172" width="1" height="2"/><rect x="188" y="172" width="1" height="2"/><rect x="189" y="172" width="1" height="2"/><rect x="190" y="173" width="1" height="2"/><rect x="191" y="173" width="1" height="2"/><rect x="192" y="173" width="1" height="2"/><rect x="193" y="173" width="1" height="2"/><rect x="194" y="172" width="549" height="2"/><rect x="300" y="174" width="9" height="1"/><rect x="300" y="172" width="9" height="1" fill="#000"/><rect x="472" y="174" width="5" height="1"/><rect x="472" y="172" width="5" height="1" fill="#000"/><rect x="490" y="174" width="5" height="1"/><rect x="490" y="172" width="5" height="1" fill="#000"/><rect x="510" y="174" width="5" height="1"/><rect x="510" y="172" width="5" height="1" fill="#000"/><rect x="304" y="172" width="1" height="1"/><polyline points="111.5,166 112.5,183 113.5,185.5 117.5,185.5 119,183 120,165 121,165 122,182 123,182 124,169 125.5,168 128,168 129.5,179 130.5,179 131.5,170 132.5,170 134.5,177 135.5,177 137.5,170 140,169.8 142,171 144,175.5 146,175.5 148,174.5 150,171.5 152.5,171.5 154,174.5 155,174.5 156,172 157,174 159,174 160.3,171.5 161.5,174 167,174 168.2,171.5 169.5,174 182.5,174" fill="none" stroke="#0000ff" stroke-width="2" stroke-linejoin="round"/></svg>
<div class="t" style="position:absolute;left:0;width:84px;top:114px;text-align:right;font-size:12px;line-height:14px;letter-spacing:0.35px">0.15</div>
<div class="t" style="position:absolute;left:0;width:84px;top:131px;text-align:right;font-size:12px;line-height:14px;letter-spacing:0.35px">0.10</div>
<div class="t" style="position:absolute;left:0;width:84px;top:149px;text-align:right;font-size:12px;line-height:14px;letter-spacing:0.35px">0.05</div>
<div class="t" style="position:absolute;left:0;width:84px;top:166px;text-align:right;font-size:12px;line-height:14px;letter-spacing:0.35px">0.00</div>
<div class="t" style="position:absolute;left:0;width:84px;top:184px;text-align:right;font-size:12px;line-height:14px;letter-spacing:0.35px">-0.05</div>
<div class="t" style="position:absolute;left:0;width:84px;top:201px;text-align:right;font-size:12px;line-height:14px;letter-spacing:0.35px">-0.10</div>
<div class="t" style="position:absolute;left:64.2px;width:80px;top:223px;text-align:center;font-size:12px;line-height:14px;letter-spacing:0.8px">0</div>
<div class="t" style="position:absolute;left:149.2px;width:80px;top:223px;text-align:center;font-size:12px;line-height:14px;letter-spacing:0.8px">200</div>
<div class="t" style="position:absolute;left:235.2px;width:80px;top:223px;text-align:center;font-size:12px;line-height:14px;letter-spacing:0.8px">400</div>
<div class="t" style="position:absolute;left:321.2px;width:80px;top:223px;text-align:center;font-size:12px;line-height:14px;letter-spacing:0.8px">600</div>
<div class="t" style="position:absolute;left:407.2px;width:80px;top:223px;text-align:center;font-size:12px;line-height:14px;letter-spacing:0.8px">800</div>
<div class="t" style="position:absolute;left:493.2px;width:80px;top:223px;text-align:center;font-size:12px;line-height:14px;letter-spacing:0.8px">1k</div>
<div class="t" style="position:absolute;left:579.2px;width:80px;top:223px;text-align:center;font-size:12px;line-height:14px;letter-spacing:0.8px">1200</div>
<div class="t" style="position:absolute;left:665.2px;width:80px;top:223px;text-align:center;font-size:12px;line-height:14px;letter-spacing:0.8px">1400</div>
<div class="t" style="position:absolute;left:394px;top:247px;white-space:pre;font-weight:bold;font-size:13px;line-height:15px;word-spacing:1.2px;letter-spacing:-0.1px">time [ms]</div>
<div style="position:absolute;left:16px;top:182px;width:0;height:0;"><div class="t" style="position:absolute;left:0;top:0;transform:rotate(-90deg);transform-origin:0 0;white-space:pre;font-weight:bold;font-size:14px;line-height:16px;letter-spacing:0.55px;-webkit-text-stroke:0.35px #000">amplitude</div></div>
<div style="position:absolute;left:86px;top:167px;width:7px;height:4px;background:#000"></div>
<div style="position:absolute;left:87px;top:168px;width:5px;height:2px;background:#ff0000"></div>
<div style="position:absolute;left:86px;top:172px;width:7px;height:45px;background:#000"></div>
<div style="position:absolute;left:87px;top:173px;width:5px;height:43px;background:#00ff00"></div>
<div style="position:absolute;left:94px;top:169px;width:7px;height:48px;background:#000"></div>
<div style="position:absolute;left:95px;top:170px;width:5px;height:2px;background:#ff0000"></div>
<div style="position:absolute;left:95px;top:174px;width:5px;height:42px;background:#00ff00"></div>
<div style="position:absolute;left:14px;top:239px;width:73px;height:38px;background:#fff"></div>
<svg style="left:14px;top:239px" width="73" height="38" shape-rendering="crispEdges"><rect x="1" y="17" width="1" height="7" fill="#ff3333"/><rect x="2" y="17" width="1" height="7" fill="#ff3333"/><rect x="3" y="16" width="1" height="9" fill="#ff6a5a"/><rect x="4" y="15" width="1" height="12" fill="#ff3333"/><rect x="5" y="15" width="1" height="12" fill="#ff3333"/><rect x="6" y="16" width="1" height="11" fill="#ff6a5a"/><rect x="7" y="18" width="1" height="7" fill="#ff3333"/><rect x="8" y="18" width="1" height="7" fill="#ff3333"/><rect x="9" y="17" width="1" height="7" fill="#ff6a5a"/><rect x="10" y="17" width="1" height="7" fill="#ff3333"/><rect x="11" y="16" width="1" height="8" fill="#ff3333"/><rect x="12" y="16" width="1" height="8" fill="#ff6a5a"/><rect x="13" y="14" width="1" height="12" fill="#ff3333"/><rect x="14" y="14" width="1" height="12" fill="#ff3333"/><rect x="15" y="14" width="1" height="12" fill="#ff6a5a"/><rect x="16" y="12" width="1" height="7" fill="#ff3333"/><rect x="17" y="12" width="1" height="7" fill="#ff3333"/><rect x="18" y="12" width="1" height="7" fill="#ff6a5a"/><rect x="19" y="10" width="1" height="7" fill="#ff3333"/><rect x="20" y="10" width="1" height="7" fill="#ff3333"/><rect x="21" y="10" width="1" height="7" fill="#ff6a5a"/><rect x="22" y="8" width="1" height="12" fill="#ff3333"/><rect x="23" y="8" width="1" height="12" fill="#ff3333"/><rect x="24" y="8" width="1" height="12" fill="#ff6a5a"/><rect x="25" y="12" width="1" height="13" fill="#ff3333"/><rect x="26" y="12" width="1" height="13" fill="#ff3333"/><rect x="27" y="12" width="1" height="13" fill="#ff6a5a"/><rect x="28" y="13" width="1" height="12" fill="#ff3333"/><rect x="29" y="13" width="1" height="12" fill="#ff3333"/><rect x="30" y="13" width="1" height="12" fill="#ff6a5a"/><rect x="31" y="12" width="1" height="7" fill="#ff3333"/><rect x="32" y="12" width="1" height="7" fill="#ff3333"/><rect x="33" y="12" width="1" height="7" fill="#ff6a5a"/><rect x="34" y="10" width="1" height="12" fill="#ff3333"/><rect x="35" y="10" width="1" height="12" fill="#ff3333"/><rect x="36" y="10" width="1" height="12" fill="#ff6a5a"/><rect x="37" y="7" width="1" height="13" fill="#ff3333"/><rect x="38" y="7" width="1" height="13" fill="#ff3333"/><rect x="39" y="7" width="1" height="13" fill="#ff6a5a"/><rect x="40" y="5" width="1" height="15" fill="#ff3333"/><rect x="41" y="5" width="1" height="15" fill="#ff3333"/><rect x="42" y="5" width="1" height="15" fill="#ff6a5a"/><rect x="43" y="2" width="1" height="12" fill="#ff3333"/><rect x="44" y="2" width="1" height="12" fill="#ff3333"/><rect x="45" y="2" width="1" height="12" fill="#ff6a5a"/><rect x="46" y="6" width="1" height="12" fill="#ff3333"/><rect x="47" y="6" width="1" height="12" fill="#ff3333"/><rect x="48" y="6" width="1" height="12" fill="#ff6a5a"/><rect x="49" y="9" width="1" height="7" fill="#ff3333"/><rect x="50" y="9" width="1" height="7" fill="#ff3333"/><rect x="51" y="9" width="1" height="7" fill="#ff6a5a"/><rect x="52" y="12" width="1" height="6" fill="#ff3333"/><rect x="53" y="12" width="1" height="6" fill="#ff3333"/><rect x="54" y="12" width="1" height="6" fill="#ff6a5a"/><rect x="55" y="13" width="1" height="12" fill="#ff3333"/><rect x="56" y="13" width="1" height="12" fill="#ff3333"/><rect x="57" y="13" width="1" height="12" fill="#ff6a5a"/><rect x="58" y="9" width="1" height="12" fill="#ff3333"/><rect x="59" y="9" width="1" height="12" fill="#ff3333"/><rect x="60" y="9" width="1" height="12" fill="#ff6a5a"/><rect x="61" y="11" width="1" height="7" fill="#ff3333"/><rect x="62" y="11" width="1" height="7" fill="#ff3333"/><rect x="63" y="11" width="1" height="7" fill="#ff6a5a"/><rect x="64" y="13" width="1" height="7" fill="#ff3333"/><rect x="65" y="13" width="1" height="7" fill="#ff3333"/><rect x="66" y="13" width="1" height="7" fill="#ff6a5a"/><rect x="67" y="12" width="1" height="11" fill="#ff3333"/><rect x="68" y="12" width="1" height="11" fill="#ff3333"/><rect x="69" y="12" width="1" height="11" fill="#ff6a5a"/><rect x="70" y="15" width="1" height="7" fill="#ff3333"/><rect x="71" y="15" width="1" height="7" fill="#ff3333"/><rect x="72" y="17" width="1" height="6" fill="#ff6a5a"/></svg>
<div class="t" style="position:absolute;left:14px;top:266px;white-space:pre;font-size:10px;line-height:11px;letter-spacing:-0.32px">Dr-Jordan-Design</div>
<div style="position:absolute;left:8px;top:283px;width:741px;height:205px;background:#404040"></div>
<div style="position:absolute;left:8px;top:283px;width:740px;height:204px;background:#d4d0c8"></div>
<div style="position:absolute;left:9px;top:284px;width:739px;height:203px;background:#808080"></div>
<div style="position:absolute;left:9px;top:284px;width:738px;height:202px;background:#ffffff"></div>
<div style="position:absolute;left:10px;top:285px;width:737px;height:201px;background:#d4d0c8"></div>
<div style="position:absolute;left:12px;top:287px;width:733px;height:18px;background:linear-gradient(to right,#808080 0px,#c0c0c0 681px)"></div>
<svg style="left:14px;top:288px" width="16" height="16" viewBox="0 0 16 16">
<polygon points="5,0.6 15.4,5 11,15.4 0.6,11" fill="#fff" stroke="#000" stroke-width="1.1"/>
<path d="M14.2 6.2 L10.4 14.2" stroke="#909090" stroke-width="1" fill="none"/>
<path d="M4.5 4.2 L8.8 5.2 M3.2 9.6 L6.8 10.6 M10 9.5 L12.5 10" stroke="#a0a0a0" stroke-width="0.9" fill="none"/>
<path d="M2.8 6.3 L8.6 7.6 L11.8 4.6 M8.6 7.6 L7.4 12.3" stroke="#ff1010" stroke-width="1.2" fill="none"/>
</svg>
<div class="t" style="position:absolute;left:31px;top:290px;white-space:pre;color:#d4d0c8;font-weight:bold;letter-spacing:0.3px">Unbenannt:2</div>
<div style="position:absolute;left:693px;top:289px;width:16px;height:14px;background:#404040"></div>
<div style="position:absolute;left:693px;top:289px;width:15px;height:13px;background:#ffffff"></div>
<div style="position:absolute;left:694px;top:290px;width:14px;height:12px;background:#808080"></div>
<div style="position:absolute;left:694px;top:290px;width:13px;height:11px;background:#d4d0c8"></div>
<div style="position:absolute;left:695px;top:291px;width:12px;height:10px;background:#d4d0c8"></div>
<div style="position:absolute;left:697px;top:298px;width:6px;height:2px;background:#000"></div>
<div style="position:absolute;left:709px;top:289px;width:16px;height:14px;background:#404040"></div>
<div style="position:absolute;left:709px;top:289px;width:15px;height:13px;background:#ffffff"></div>
<div style="position:absolute;left:710px;top:290px;width:14px;height:12px;background:#808080"></div>
<div style="position:absolute;left:710px;top:290px;width:13px;height:11px;background:#d4d0c8"></div>
<div style="position:absolute;left:711px;top:291px;width:12px;height:10px;background:#d4d0c8"></div>
<div style="position:absolute;left:712px;top:291px;width:9px;height:9px;background:#000"></div>
<div style="position:absolute;left:713px;top:293px;width:7px;height:6px;background:#d4d0c8"></div>
<div style="position:absolute;left:727px;top:289px;width:16px;height:14px;background:#404040"></div>
<div style="position:absolute;left:727px;top:289px;width:15px;height:13px;background:#ffffff"></div>
<div style="position:absolute;left:728px;top:290px;width:14px;height:12px;background:#808080"></div>
<div style="position:absolute;left:728px;top:290px;width:13px;height:11px;background:#d4d0c8"></div>
<div style="position:absolute;left:729px;top:291px;width:12px;height:10px;background:#d4d0c8"></div>
<svg style="left:727px;top:289px" width="16" height="14"><path d="M4.5 3.5 L11 10 M4 3.5 L10.5 10 M11 3.5 L4.5 10 M11.5 3.5 L5 10" stroke="#000" stroke-width="1" fill="none" shape-rendering="crispEdges"/></svg>
<div style="position:absolute;left:12px;top:306px;width:733px;height:178px;background:#ffffff"></div>
<div style="position:absolute;left:12px;top:306px;width:732px;height:177px;background:#808080"></div>
<div style="position:absolute;left:13px;top:307px;width:731px;height:176px;background:#d4d0c8"></div>
<div style="position:absolute;left:13px;top:307px;width:730px;height:175px;background:#404040"></div>
<div style="position:absolute;left:14px;top:308px;width:729px;height:174px;background:#969664"></div>
<div style="position:absolute;left:103px;top:317px;width:640px;height:106px;background:#000"></div>
<div style="position:absolute;left:103px;top:326px;width:640px;height:1px;background:repeating-linear-gradient(90deg,#a8a8a8 0 3px,transparent 3px 6px);background-position:1px 0"></div>
<div style="position:absolute;left:103px;top:343px;width:640px;height:1px;background:repeating-linear-gradient(90deg,#a8a8a8 0 3px,transparent 3px 6px);background-position:1px 0"></div>
<div style="position:absolute;left:103px;top:361px;width:640px;height:1px;background:repeating-linear-gradient(90deg,#a8a8a8 0 3px,transparent 3px 6px);background-position:1px 0"></div>
<div style="position:absolute;left:103px;top:378px;width:640px;height:1px;background:repeating-linear-gradient(90deg,#a8a8a8 0 3px,transparent 3px 6px);background-position:1px 0"></div>
<div style="position:absolute;left:103px;top:396px;width:640px;height:1px;background:repeating-linear-gradient(90deg,#a8a8a8 0 3px,transparent 3px 6px);background-position:1px 0"></div>
<div style="position:absolute;left:103px;top:413px;width:640px;height:1px;background:repeating-linear-gradient(90deg,#a8a8a8 0 3px,transparent 3px 6px);background-position:1px 0"></div>
<div style="position:absolute;left:121px;top:319px;width:1px;height:102px;background:repeating-linear-gradient(180deg,#a8a8a8 0 3px,transparent 3px 6px);background-position:0 -1px"></div>
<div style="position:absolute;left:138px;top:319px;width:1px;height:102px;background:repeating-linear-gradient(180deg,#a8a8a8 0 3px,transparent 3px 6px);background-position:0 -1px"></div>
<div style="position:absolute;left:155px;top:319px;width:1px;height:102px;background:repeating-linear-gradient(180deg,#a8a8a8 0 3px,transparent 3px 6px);background-position:0 -1px"></div>
<div style="position:absolute;left:172px;top:319px;width:1px;height:102px;background:repeating-linear-gradient(180deg,#a8a8a8 0 3px,transparent 3px 6px);background-position:0 -1px"></div>
<div style="position:absolute;left:188px;top:319px;width:2px;height:102px;background:#a8a8a8"></div>
<div style="position:absolute;left:207px;top:319px;width:1px;height:102px;background:repeating-linear-gradient(180deg,#a8a8a8 0 3px,transparent 3px 6px);background-position:0 -1px"></div>
<div style="position:absolute;left:224px;top:319px;width:1px;height:102px;background:repeating-linear-gradient(180deg,#a8a8a8 0 3px,transparent 3px 6px);background-position:0 -1px"></div>
<div style="position:absolute;left:241px;top:319px;width:1px;height:102px;background:repeating-linear-gradient(180deg,#a8a8a8 0 3px,transparent 3px 6px);background-position:0 -1px"></div>
<div style="position:absolute;left:258px;top:319px;width:1px;height:102px;background:repeating-linear-gradient(180deg,#a8a8a8 0 3px,transparent 3px 6px);background-position:0 -1px"></div>
<div style="position:absolute;left:274px;top:319px;width:2px;height:102px;background:#a8a8a8"></div>
<div style="position:absolute;left:293px;top:319px;width:1px;height:102px;background:repeating-linear-gradient(180deg,#a8a8a8 0 3px,transparent 3px 6px);background-position:0 -1px"></div>
<div style="position:absolute;left:310px;top:319px;width:1px;height:102px;background:repeating-linear-gradient(180deg,#a8a8a8 0 3px,transparent 3px 6px);background-position:0 -1px"></div>
<div style="position:absolute;left:327px;top:319px;width:1px;height:102px;background:repeating-linear-gradient(180deg,#a8a8a8 0 3px,transparent 3px 6px);background-position:0 -1px"></div>
<div style="position:absolute;left:344px;top:319px;width:1px;height:102px;background:repeating-linear-gradient(180deg,#a8a8a8 0 3px,transparent 3px 6px);background-position:0 -1px"></div>
<div style="position:absolute;left:360px;top:319px;width:2px;height:102px;background:#a8a8a8"></div>
<div style="position:absolute;left:379px;top:319px;width:1px;height:102px;background:repeating-linear-gradient(180deg,#a8a8a8 0 3px,transparent 3px 6px);background-position:0 -1px"></div>
<div style="position:absolute;left:396px;top:319px;width:1px;height:102px;background:repeating-linear-gradient(180deg,#a8a8a8 0 3px,transparent 3px 6px);background-position:0 -1px"></div>
<div style="position:absolute;left:413px;top:319px;width:1px;height:102px;background:repeating-linear-gradient(180deg,#a8a8a8 0 3px,transparent 3px 6px);background-position:0 -1px"></div>
<div style="position:absolute;left:430px;top:319px;width:1px;height:102px;background:repeating-linear-gradient(180deg,#a8a8a8 0 3px,transparent 3px 6px);background-position:0 -1px"></div>
<div style="position:absolute;left:446px;top:319px;width:2px;height:102px;background:#a8a8a8"></div>
<div style="position:absolute;left:465px;top:319px;width:1px;height:102px;background:repeating-linear-gradient(180deg,#a8a8a8 0 3px,transparent 3px 6px);background-position:0 -1px"></div>
<div style="position:absolute;left:482px;top:319px;width:1px;height:102px;background:repeating-linear-gradient(180deg,#a8a8a8 0 3px,transparent 3px 6px);background-position:0 -1px"></div>
<div style="position:absolute;left:499px;top:319px;width:1px;height:102px;background:repeating-linear-gradient(180deg,#a8a8a8 0 3px,transparent 3px 6px);background-position:0 -1px"></div>
<div style="position:absolute;left:516px;top:319px;width:1px;height:102px;background:repeating-linear-gradient(180deg,#a8a8a8 0 3px,transparent 3px 6px);background-position:0 -1px"></div>
<div style="position:absolute;left:532px;top:319px;width:2px;height:102px;background:#a8a8a8"></div>
<div style="position:absolute;left:551px;top:319px;width:1px;height:102px;background:repeating-linear-gradient(180deg,#a8a8a8 0 3px,transparent 3px 6px);background-position:0 -1px"></div>
<div style="position:absolute;left:568px;top:319px;width:1px;height:102px;background:repeating-linear-gradient(180deg,#a8a8a8 0 3px,transparent 3px 6px);background-position:0 -1px"></div>
<div style="position:absolute;left:585px;top:319px;width:1px;height:102px;background:repeating-linear-gradient(180deg,#a8a8a8 0 3px,transparent 3px 6px);background-position:0 -1px"></div>
<div style="position:absolute;left:602px;top:319px;width:1px;height:102px;background:repeating-linear-gradient(180deg,#a8a8a8 0 3px,transparent 3px 6px);background-position:0 -1px"></div>
<div style="position:absolute;left:618px;top:319px;width:2px;height:102px;background:#a8a8a8"></div>
<div style="position:absolute;left:636px;top:319px;width:1px;height:102px;background:repeating-linear-gradient(180deg,#a8a8a8 0 3px,transparent 3px 6px);background-position:0 -1px"></div>
<div style="position:absolute;left:654px;top:319px;width:1px;height:102px;background:repeating-linear-gradient(180deg,#a8a8a8 0 3px,transparent 3px 6px);background-position:0 -1px"></div>
<div style="position:absolute;left:671px;top:319px;width:1px;height:102px;background:repeating-linear-gradient(180deg,#a8a8a8 0 3px,transparent 3px 6px);background-position:0 -1px"></div>
<div style="position:absolute;left:688px;top:319px;width:1px;height:102px;background:repeating-linear-gradient(180deg,#a8a8a8 0 3px,transparent 3px 6px);background-position:0 -1px"></div>
<div style="position:absolute;left:704px;top:319px;width:2px;height:102px;background:#a8a8a8"></div>
<div style="position:absolute;left:722px;top:319px;width:1px;height:102px;background:repeating-linear-gradient(180deg,#a8a8a8 0 3px,transparent 3px 6px);background-position:0 -1px"></div>
<div style="position:absolute;left:740px;top:319px;width:1px;height:102px;background:repeating-linear-gradient(180deg,#a8a8a8 0 3px,transparent 3px 6px);background-position:0 -1px"></div>
<svg style="left:0;top:0" width="757" height="514" shape-rendering="crispEdges" fill="#0000ff"><rect x="104" y="352" width="1" height="27"/><rect x="105" y="326" width="1" height="53"/><rect x="106" y="326" width="1" height="27"/><rect x="107" y="327" width="1" height="45"/><rect x="108" y="349" width="1" height="23"/><rect x="109" y="355" width="1" height="17"/><rect x="110" y="355" width="1" height="17"/><rect x="111" y="355" width="1" height="18"/><rect x="182" y="377" width="1" height="2"/><rect x="183" y="377" width="1" height="2"/><rect x="184" y="377" width="1" height="2"/><rect x="185" y="377" width="1" height="2"/><rect x="186" y="377" width="1" height="2"/><rect x="187" y="377" width="1" height="2"/><rect x="188" y="377" width="1" height="2"/><rect x="189" y="377" width="1" height="2"/><rect x="190" y="378" width="1" height="2"/><rect x="191" y="378" width="1" height="2"/><rect x="192" y="378" width="1" height="2"/><rect x="193" y="378" width="1" height="2"/><rect x="194" y="377" width="549" height="2"/><rect x="300" y="379" width="9" height="1"/><rect x="300" y="377" width="9" height="1" fill="#000"/><rect x="472" y="379" width="5" height="1"/><rect x="472" y="377" width="5" height="1" fill="#000"/><rect x="490" y="379" width="5" height="1"/><rect x="490" y="377" width="5" height="1" fill="#000"/><rect x="510" y="379" width="5" height="1"/><rect x="510" y="377" width="5" height="1" fill="#000"/><rect x="304" y="377" width="1" height="1"/><polyline points="111.5,371 112.5,388 113.5,390.5 117.5,390.5 119,388 120,370 121,370 122,387 123,387 124,374 125.5,373 128,373 129.5,384 130.5,384 131.5,375 132.5,375 134.5,382 135.5,382 137.5,375 140,374.8 142,376 144,380.5 146,380.5 148,379.5 150,376.5 152.5,376.5 154,379.5 155,379.5 156,377 157,379 159,379 160.3,376.5 161.5,379 167,379 168.2,376.5 169.5,379 182.5,379" fill="none" stroke="#0000ff" stroke-width="2" stroke-linejoin="round"/></svg>
<div class="t" style="position:absolute;left:0;width:84px;top:319px;text-align:right;font-size:12px;line-height:14px;letter-spacing:0.35px">0.15</div>
<div class="t" style="position:absolute;left:0;width:84px;top:336px;text-align:right;font-size:12px;line-height:14px;letter-spacing:0.35px">0.10</div>
<div class="t" style="position:absolute;left:0;width:84px;top:354px;text-align:right;font-size:12px;line-height:14px;letter-spacing:0.35px">0.05</div>
<div class="t" style="position:absolute;left:0;width:84px;top:371px;text-align:right;font-size:12px;line-height:14px;letter-spacing:0.35px">0.00</div>
<div class="t" style="position:absolute;left:0;width:84px;top:389px;text-align:right;font-size:12px;line-height:14px;letter-spacing:0.35px">-0.05</div>
<div class="t" style="position:absolute;left:0;width:84px;top:406px;text-align:right;font-size:12px;line-height:14px;letter-spacing:0.35px">-0.10</div>
<div class="t" style="position:absolute;left:64.2px;width:80px;top:428px;text-align:center;font-size:12px;line-height:14px;letter-spacing:0.8px">0</div>
<div class="t" style="position:absolute;left:149.2px;width:80px;top:428px;text-align:center;font-size:12px;line-height:14px;letter-spacing:0.8px">200</div>
<div class="t" style="position:absolute;left:235.2px;width:80px;top:428px;text-align:center;font-size:12px;line-height:14px;letter-spacing:0.8px">400</div>
<div class="t" style="position:absolute;left:321.2px;width:80px;top:428px;text-align:center;font-size:12px;line-height:14px;letter-spacing:0.8px">600</div>
<div class="t" style="position:absolute;left:407.2px;width:80px;top:428px;text-align:center;font-size:12px;line-height:14px;letter-spacing:0.8px">800</div>
<div class="t" style="position:absolute;left:493.2px;width:80px;top:428px;text-align:center;font-size:12px;line-height:14px;letter-spacing:0.8px">1k</div>
<div class="t" style="position:absolute;left:579.2px;width:80px;top:428px;text-align:center;font-size:12px;line-height:14px;letter-spacing:0.8px">1200</div>
<div class="t" style="position:absolute;left:665.2px;width:80px;top:428px;text-align:center;font-size:12px;line-height:14px;letter-spacing:0.8px">1400</div>
<div class="t" style="position:absolute;left:394px;top:452px;white-space:pre;font-weight:bold;font-size:13px;line-height:15px;word-spacing:1.2px;letter-spacing:-0.1px">time [ms]</div>
<div style="position:absolute;left:16px;top:387px;width:0;height:0;"><div class="t" style="position:absolute;left:0;top:0;transform:rotate(-90deg);transform-origin:0 0;white-space:pre;font-weight:bold;font-size:14px;line-height:16px;letter-spacing:0.55px;-webkit-text-stroke:0.35px #000">amplitude</div></div>
<div style="position:absolute;left:86px;top:372px;width:7px;height:4px;background:#000"></div>
<div style="position:absolute;left:87px;top:373px;width:5px;height:2px;background:#ff0000"></div>
<div style="position:absolute;left:86px;top:377px;width:7px;height:45px;background:#000"></div>
<div style="position:absolute;left:87px;top:378px;width:5px;height:43px;background:#00ff00"></div>
<div style="position:absolute;left:94px;top:374px;width:7px;height:48px;background:#000"></div>
<div style="position:absolute;left:95px;top:375px;width:5px;height:2px;background:#ff0000"></div>
<div style="position:absolute;left:95px;top:379px;width:5px;height:42px;background:#00ff00"></div>
<div style="position:absolute;left:14px;top:444px;width:73px;height:38px;background:#fff"></div>
<svg style="left:14px;top:444px" width="73" height="38" shape-rendering="crispEdges"><rect x="1" y="17" width="1" height="7" fill="#ff3333"/><rect x="2" y="17" width="1" height="7" fill="#ff3333"/><rect x="3" y="16" width="1" height="9" fill="#ff6a5a"/><rect x="4" y="15" width="1" height="12" fill="#ff3333"/><rect x="5" y="15" width="1" height="12" fill="#ff3333"/><rect x="6" y="16" width="1" height="11" fill="#ff6a5a"/><rect x="7" y="18" width="1" height="7" fill="#ff3333"/><rect x="8" y="18" width="1" height="7" fill="#ff3333"/><rect x="9" y="17" width="1" height="7" fill="#ff6a5a"/><rect x="10" y="17" width="1" height="7" fill="#ff3333"/><rect x="11" y="16" width="1" height="8" fill="#ff3333"/><rect x="12" y="16" width="1" height="8" fill="#ff6a5a"/><rect x="13" y="14" width="1" height="12" fill="#ff3333"/><rect x="14" y="14" width="1" height="12" fill="#ff3333"/><rect x="15" y="14" width="1" height="12" fill="#ff6a5a"/><rect x="16" y="12" width="1" height="7" fill="#ff3333"/><rect x="17" y="12" width="1" height="7" fill="#ff3333"/><rect x="18" y="12" width="1" height="7" fill="#ff6a5a"/><rect x="19" y="10" width="1" height="7" fill="#ff3333"/><rect x="20" y="10" width="1" height="7" fill="#ff3333"/><rect x="21" y="10" width="1" height="7" fill="#ff6a5a"/><rect x="22" y="8" width="1" height="12" fill="#ff3333"/><rect x="23" y="8" width="1" height="12" fill="#ff3333"/><rect x="24" y="8" width="1" height="12" fill="#ff6a5a"/><rect x="25" y="12" width="1" height="13" fill="#ff3333"/><rect x="26" y="12" width="1" height="13" fill="#ff3333"/><rect x="27" y="12" width="1" height="13" fill="#ff6a5a"/><rect x="28" y="13" width="1" height="12" fill="#ff3333"/><rect x="29" y="13" width="1" height="12" fill="#ff3333"/><rect x="30" y="13" width="1" height="12" fill="#ff6a5a"/><rect x="31" y="12" width="1" height="7" fill="#ff3333"/><rect x="32" y="12" width="1" height="7" fill="#ff3333"/><rect x="33" y="12" width="1" height="7" fill="#ff6a5a"/><rect x="34" y="10" width="1" height="12" fill="#ff3333"/><rect x="35" y="10" width="1" height="12" fill="#ff3333"/><rect x="36" y="10" width="1" height="12" fill="#ff6a5a"/><rect x="37" y="7" width="1" height="13" fill="#ff3333"/><rect x="38" y="7" width="1" height="13" fill="#ff3333"/><rect x="39" y="7" width="1" height="13" fill="#ff6a5a"/><rect x="40" y="5" width="1" height="15" fill="#ff3333"/><rect x="41" y="5" width="1" height="15" fill="#ff3333"/><rect x="42" y="5" width="1" height="15" fill="#ff6a5a"/><rect x="43" y="2" width="1" height="12" fill="#ff3333"/><rect x="44" y="2" width="1" height="12" fill="#ff3333"/><rect x="45" y="2" width="1" height="12" fill="#ff6a5a"/><rect x="46" y="6" width="1" height="12" fill="#ff3333"/><rect x="47" y="6" width="1" height="12" fill="#ff3333"/><rect x="48" y="6" width="1" height="12" fill="#ff6a5a"/><rect x="49" y="9" width="1" height="7" fill="#ff3333"/><rect x="50" y="9" width="1" height="7" fill="#ff3333"/><rect x="51" y="9" width="1" height="7" fill="#ff6a5a"/><rect x="52" y="12" width="1" height="6" fill="#ff3333"/><rect x="53" y="12" width="1" height="6" fill="#ff3333"/><rect x="54" y="12" width="1" height="6" fill="#ff6a5a"/><rect x="55" y="13" width="1" height="12" fill="#ff3333"/><rect x="56" y="13" width="1" height="12" fill="#ff3333"/><rect x="57" y="13" width="1" height="12" fill="#ff6a5a"/><rect x="58" y="9" width="1" height="12" fill="#ff3333"/><rect x="59" y="9" width="1" height="12" fill="#ff3333"/><rect x="60" y="9" width="1" height="12" fill="#ff6a5a"/><rect x="61" y="11" width="1" height="7" fill="#ff3333"/><rect x="62" y="11" width="1" height="7" fill="#ff3333"/><rect x="63" y="11" width="1" height="7" fill="#ff6a5a"/><rect x="64" y="13" width="1" height="7" fill="#ff3333"/><rect x="65" y="13" width="1" height="7" fill="#ff3333"/><rect x="66" y="13" width="1" height="7" fill="#ff6a5a"/><rect x="67" y="12" width="1" height="11" fill="#ff3333"/><rect x="68" y="12" width="1" height="11" fill="#ff3333"/><rect x="69" y="12" width="1" height="11" fill="#ff6a5a"/><rect x="70" y="15" width="1" height="7" fill="#ff3333"/><rect x="71" y="15" width="1" height="7" fill="#ff3333"/><rect x="72" y="17" width="1" height="6" fill="#ff6a5a"/></svg>
<div class="t" style="position:absolute;left:14px;top:471px;white-space:pre;font-size:10px;line-height:11px;letter-spacing:-0.32px">Dr-Jordan-Design</div>
<div class="t" style="position:absolute;left:7px;top:494px;white-space:pre;letter-spacing:0.2px">Ready</div>
<div style="position:absolute;left:466px;top:492px;width:42px;height:16px;background:#ffffff"></div>
<div style="position:absolute;left:466px;top:492px;width:41px;height:15px;background:#808080"></div>
<div style="position:absolute;left:467px;top:493px;width:40px;height:14px;background:#d4d0c8"></div>
<div class="t" style="position:absolute;left:467px;top:494px;white-space:pre;letter-spacing:0.4px">44100</div>
<div style="position:absolute;left:510px;top:492px;width:60px;height:16px;background:#ffffff"></div>
<div style="position:absolute;left:510px;top:492px;width:59px;height:15px;background:#808080"></div>
<div style="position:absolute;left:511px;top:493px;width:58px;height:14px;background:#d4d0c8"></div>
<div class="t" style="position:absolute;left:510px;width:60px;top:494px;text-align:center;letter-spacing:0.6px">65536</div>
<div style="position:absolute;left:572px;top:492px;width:42px;height:16px;background:#ffffff"></div>
<div style="position:absolute;left:572px;top:492px;width:41px;height:15px;background:#808080"></div>
<div style="position:absolute;left:573px;top:493px;width:40px;height:14px;background:#d4d0c8"></div>
<div class="t" style="position:absolute;left:573px;top:494px;white-space:pre;letter-spacing:0.4px">1.49s</div>
<div style="position:absolute;left:616px;top:492px;width:27px;height:16px;background:#ffffff"></div>
<div style="position:absolute;left:616px;top:492px;width:26px;height:15px;background:#808080"></div>
<div style="position:absolute;left:617px;top:493px;width:25px;height:14px;background:#d4d0c8"></div>
<div style="position:absolute;left:645px;top:492px;width:88px;height:16px;background:#ffffff"></div>
<div style="position:absolute;left:645px;top:492px;width:87px;height:15px;background:#808080"></div>
<div style="position:absolute;left:646px;top:493px;width:86px;height:14px;background:#d4d0c8"></div>
<div class="t" style="position:absolute;left:646px;top:494px;white-space:pre;">Rectangular</div>
<svg style="left:739px;top:495px" width="12" height="12" viewBox="0 0 12 12" shape-rendering="crispEdges"><path d="M11 1 L1 11 M11 5 L5 11 M11 9 L9 11" stroke="#fff" stroke-width="1" fill="none"/><path d="M12 1 L1 12 M12 2 L2 12 M12 5 L5 12 M12 6 L6 12 M12 9 L9 12 M12 10 L10 12" stroke="#808080" stroke-width="1" fill="none"/></svg>
</body></html>
